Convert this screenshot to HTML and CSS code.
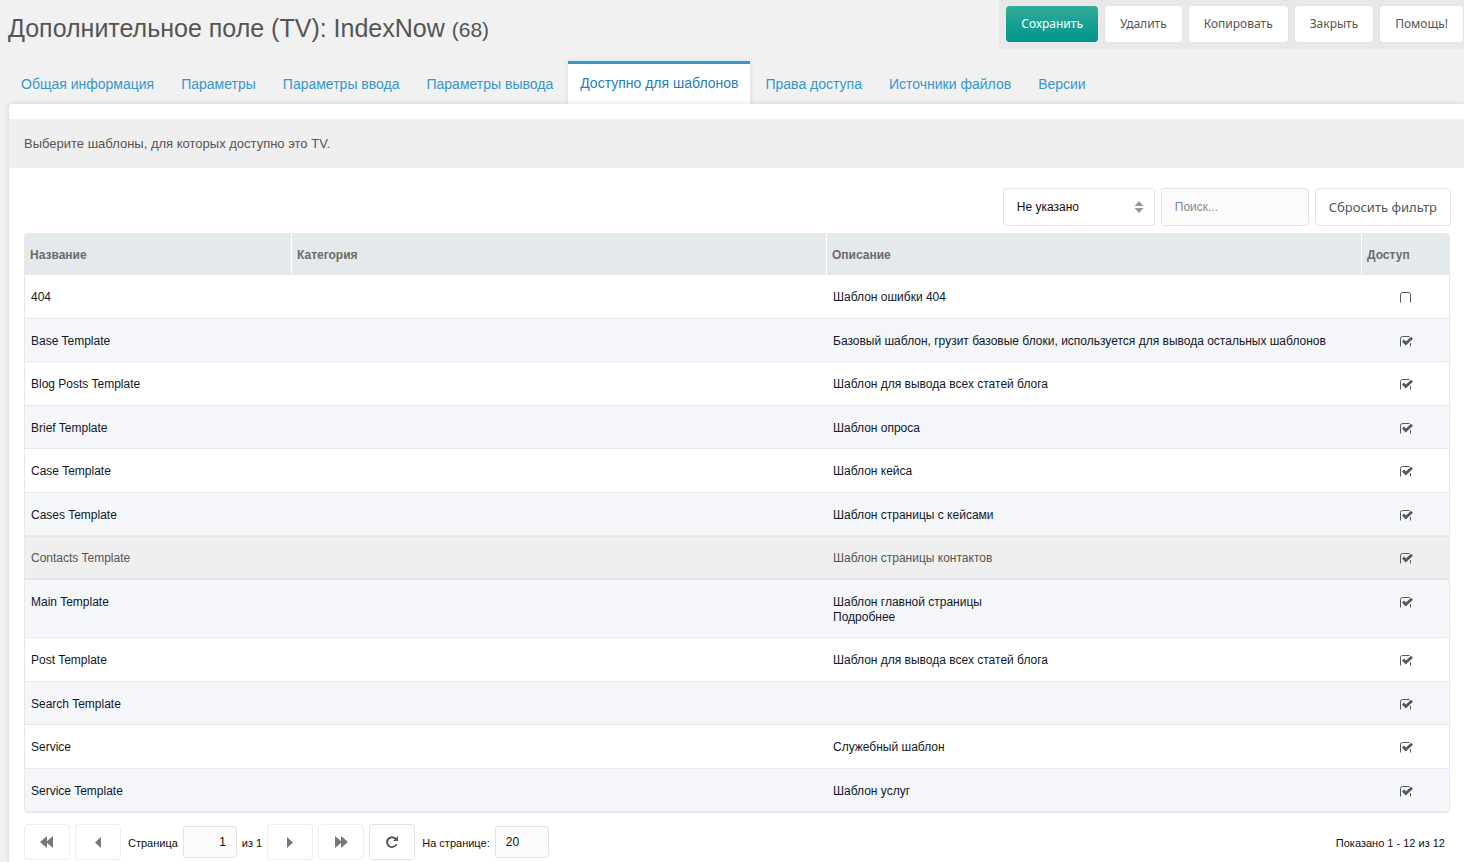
FILE: index.html
```html
<!DOCTYPE html>
<html lang="ru">
<head>
<meta charset="utf-8">
<meta name="viewport" content="width=device-width, initial-scale=1">
<title>Дополнительное поле (TV): IndexNow</title>
<link rel="stylesheet" href="styles.css">
</head>
<body>
<svg class="sprite" aria-hidden="true">
  <symbol id="box" viewBox="0 0 14 11"><path d="M1.500 10.500V2.500Q1.500 .5 3.500 .5H9.500Q11.500 .5 11.500 2.500V10.500" fill="none" stroke="currentColor"/></symbol>
  <symbol id="box-checked" viewBox="0 0 14 11"><path d="M1.500 10.500V2.500Q1.500 .5 3.500 .5H10.500M11.500 7V10.500" fill="none" stroke="currentColor"/><path d="M4 4.500L6.800 7.500L13 1.700" fill="none" stroke="currentColor" stroke-width="2.800"/></symbol>
</svg>
<header class="header">
  <h1 class="title">Дополнительное поле (TV): IndexNow <small>(68)</small></h1>
  <div class="actions">
    <button class="btn btn-primary" type="button">Сохранить</button>
    <button class="btn" type="button">Удалить</button>
    <button class="btn" type="button">Копировать</button>
    <button class="btn" type="button">Закрыть</button>
    <button class="btn" type="button">Помощь!</button>
  </div>
</header>
<nav class="tabs">
  <a class="tab" href="#">Общая информация</a>
  <a class="tab" href="#">Параметры</a>
  <a class="tab" href="#">Параметры ввода</a>
  <a class="tab" href="#">Параметры вывода</a>
  <a class="tab tab-active" href="#" aria-current="page">Доступно для шаблонов</a>
  <a class="tab" href="#">Права доступа</a>
  <a class="tab" href="#">Источники файлов</a>
  <a class="tab" href="#">Версии</a>
</nav>
<main class="panel">
  <p class="intro">Выберите шаблоны, для которых доступно это TV.</p>
  <div class="content">
    <div class="filters">
      <div class="select-wrap">
        <select class="field select" aria-label="Категория"><option>Не указано</option></select>
        <svg class="select-arrow" viewBox="0 0 10 12" aria-hidden="true"><path d="M5 0L9.500 5H.5ZM5 12L.5 7H9.500Z" fill="currentColor"/></svg>
      </div>
      <input class="field search" type="text" placeholder="Поиск..." aria-label="Поиск">
      <button class="btn btn-outline" type="button">Сбросить фильтр</button>
    </div>
    <table class="grid">
      <colgroup><col class="col-name"><col><col><col class="col-access"></colgroup>
      <thead><tr><th>Название</th><th>Категория</th><th>Описание</th><th>Доступ</th></tr></thead>
      <tbody>
        <tr><td>404</td><td></td><td>Шаблон ошибки 404</td><td><label class="check"><input type="checkbox" aria-label="404"><svg class="off"><use href="#box"/></svg><svg class="on"><use href="#box-checked"/></svg></label></td></tr>
        <tr><td>Base Template</td><td></td><td>Базовый шаблон, грузит базовые блоки, используется для вывода остальных шаблонов</td><td><label class="check"><input type="checkbox" checked aria-label="Base Template"><svg class="off"><use href="#box"/></svg><svg class="on"><use href="#box-checked"/></svg></label></td></tr>
        <tr><td>Blog Posts Template</td><td></td><td>Шаблон для вывода всех статей блога</td><td><label class="check"><input type="checkbox" checked aria-label="Blog Posts Template"><svg class="off"><use href="#box"/></svg><svg class="on"><use href="#box-checked"/></svg></label></td></tr>
        <tr><td>Brief Template</td><td></td><td>Шаблон опроса</td><td><label class="check"><input type="checkbox" checked aria-label="Brief Template"><svg class="off"><use href="#box"/></svg><svg class="on"><use href="#box-checked"/></svg></label></td></tr>
        <tr><td>Case Template</td><td></td><td>Шаблон кейса</td><td><label class="check"><input type="checkbox" checked aria-label="Case Template"><svg class="off"><use href="#box"/></svg><svg class="on"><use href="#box-checked"/></svg></label></td></tr>
        <tr><td>Cases Template</td><td></td><td>Шаблон страницы с кейсами</td><td><label class="check"><input type="checkbox" checked aria-label="Cases Template"><svg class="off"><use href="#box"/></svg><svg class="on"><use href="#box-checked"/></svg></label></td></tr>
        <tr class="row-over"><td>Contacts Template</td><td></td><td>Шаблон страницы контактов</td><td><label class="check"><input type="checkbox" checked aria-label="Contacts Template"><svg class="off"><use href="#box"/></svg><svg class="on"><use href="#box-checked"/></svg></label></td></tr>
        <tr><td>Main Template</td><td></td><td>Шаблон главной страницы<br>Подробнее</td><td><label class="check"><input type="checkbox" checked aria-label="Main Template"><svg class="off"><use href="#box"/></svg><svg class="on"><use href="#box-checked"/></svg></label></td></tr>
        <tr><td>Post Template</td><td></td><td>Шаблон для вывода всех статей блога</td><td><label class="check"><input type="checkbox" checked aria-label="Post Template"><svg class="off"><use href="#box"/></svg><svg class="on"><use href="#box-checked"/></svg></label></td></tr>
        <tr><td>Search Template</td><td></td><td></td><td><label class="check"><input type="checkbox" checked aria-label="Search Template"><svg class="off"><use href="#box"/></svg><svg class="on"><use href="#box-checked"/></svg></label></td></tr>
        <tr><td>Service</td><td></td><td>Служебный шаблон</td><td><label class="check"><input type="checkbox" checked aria-label="Service"><svg class="off"><use href="#box"/></svg><svg class="on"><use href="#box-checked"/></svg></label></td></tr>
        <tr><td>Service Template</td><td></td><td>Шаблон услуг</td><td><label class="check"><input type="checkbox" checked aria-label="Service Template"><svg class="off"><use href="#box"/></svg><svg class="on"><use href="#box-checked"/></svg></label></td></tr>
      </tbody>
    </table>
    <footer class="pager">
      <button class="page-btn" type="button" aria-label="Первая страница"><svg viewBox="0 0 14 12"><path d="M7 0V12L0 6ZM13 0V12L6 6Z"/></svg></button>
      <button class="page-btn" type="button" aria-label="Предыдущая страница"><svg viewBox="0 0 14 12"><path d="M10 1V12L4 6.500Z"/></svg></button>
      <label class="page-label" for="page">Страница</label>
      <input class="field page-field page-number" id="page" type="text" value="1">
      <span class="page-count">из 1</span>
      <button class="page-btn" type="button" aria-label="Следующая страница"><svg viewBox="0 0 14 12"><path d="M4 1V12L10 6.500Z"/></svg></button>
      <button class="page-btn" type="button" aria-label="Последняя страница"><svg viewBox="0 0 14 12"><path d="M1 0V12L8 6ZM7 0V12L14 6Z"/></svg></button>
      <button class="page-btn page-refresh" type="button" aria-label="Обновить"><svg viewBox="0 0 14 12"><path d="M13 0V5H8L9.700 3.400A3.900 3.900 0 1 0 10.400 8.200H12.500A5.900 5.900 0 1 1 11.200 1.900Z"/></svg></button>
      <label class="page-label" for="per-page">На странице:</label>
      <input class="field page-field" id="per-page" type="text" value="20">
      <span class="total">Показано 1 - 12 из 12</span>
    </footer>
  </div>
</main>
</body>
</html>
```
FILE: styles.css
```css
* { box-sizing: border-box; }
body {
  margin: 0;
  min-height: 100vh;
  display: flex;
  flex-direction: column;
  background: #f1f1f1;
  color: #555;
  font: 12px/15px "Liberation Sans", Arial, sans-serif;
}
.sprite { display: none; }
.header {
  display: flex;
  justify-content: space-between;
  align-items: flex-start;
  height: 61px;
}
.title {
  margin: 0;
  padding: 13px 0 0 8px;
  font-size: 25px;
  line-height: 30px;
  font-weight: 400;
}
.title small { font-size: 21px; }
.actions {
  display: flex;
  gap: 5px;
  padding: 5px 0 6px 6px;
  background: #e8e8e8;
  border-radius: 0 0 0 4px;
}
.btn {
  height: 38px;
  padding: 0 15px;
  border: 1px solid #e4e4e4;
  border-radius: 4px;
  background: #fff;
  color: #555;
  font: 12px/16px "Noto Sans", sans-serif;
}
.btn-primary {
  border-color: #e8e8e8;
  background: linear-gradient(#32ab9a, #00958c) padding-box;
  color: #fff;
}
.btn-outline { padding: 0 13px; font-size: 13px; }
.tabs {
  display: flex;
  gap: 3px;
  height: 43px;
  padding-left: 9px;
}
.tab {
  padding: 15px 12px 0;
  color: #3697cd;
  font-size: 14px;
  line-height: 16px;
  text-decoration: none;
}
.tab-active {
  padding-top: 11px;
  border-top: 3px solid #3697cd;
  background: #fff;
  box-shadow: 0 0 6px rgba(0, 0, 0, .1);
  color: #2780be;
}
.panel {
  position: relative;
  flex: 1;
  margin-left: 9px;
  padding-top: 15px;
  background: #fff;
  border-radius: 4px 0 0 0;
  box-shadow: 0 0 6px rgba(0, 0, 0, .12);
}
.intro {
  margin: 0;
  padding: 17px 15px 16px;
  background: #efefef;
  font-size: 13px;
  line-height: 16px;
}
.content { padding: 20px 14px 2px 15px; }
.filters {
  display: flex;
  justify-content: flex-end;
  gap: 6px;
  margin-bottom: 7px;
  margin-right: -1px;
}
.field {
  height: 38px;
  padding: 0 13px;
  border: 1px solid #e4e4e4;
  border-radius: 3px;
  background: #fbfbfb;
  color: #111;
  font: 12px/15px "Liberation Sans", Arial, sans-serif;
}
.field::placeholder { color: #888; }
.select-wrap { position: relative; }
.select {
  width: 152px;
  appearance: none;
  background: #fff;
}
.select-arrow {
  position: absolute;
  top: 13px;
  right: 11px;
  width: 10px;
  height: 12px;
  color: #999;
  pointer-events: none;
}
.search { width: 148px; }
.grid {
  width: 100%;
  table-layout: fixed;
  border-collapse: separate;
  border-spacing: 0;
  border: 1px solid #e4e9ec;
  border-width: 0 1px 1px;
  border-radius: 4px;
  overflow: hidden;
  color: #111827;
}
.col-name { width: 267px; }
.col-access { width: 87px; }
.grid th {
  height: 42px;
  padding: 2px 5px 0;
  border-right: 1px solid #fff;
  background: #e4e9ec;
  color: #6b6b6b;
  text-align: left;
}
.grid th:last-child { border-right: 0; }
.grid td {
  padding: 15px 6px 13px;
  border-bottom: 1px solid #e7e9ed;
  vertical-align: top;
}
.grid tr:nth-child(even) td {
  padding-bottom: 12px;
  background: #f4f6fa;
}
.grid tr:last-child td { border-bottom-color: #e4e9ec; }
.grid .row-over td {
  border-top: 1px solid #e4e7e8;
  border-bottom: 2px solid #e4e7e8;
  padding: 14px 6px 12px;
  background: #efefef;
  color: #555;
}
.check {
  position: relative;
  display: block;
  width: 14px;
  height: 11px;
  margin: 2px auto 0;
  color: #55585c;
}
.check input {
  position: absolute;
  inset: 0;
  width: 14px;
  height: 11px;
  margin: 0;
  opacity: 0;
}
.check svg { display: block; width: 14px; height: 11px; }
.check .on { display: none; }
.check input:checked ~ .on { display: block; }
.check input:checked ~ .off { display: none; }
.pager {
  display: flex;
  align-items: center;
  gap: 5px;
  padding-top: 11px;
  color: #111;
  font-size: 11px;
}
.page-btn {
  display: flex;
  align-items: center;
  justify-content: center;
  width: 46px;
  height: 36px;
  padding: 0;
  border: 1px solid #ededed;
  border-radius: 4px;
  background: #fff;
  color: #777;
}
.page-btn svg { width: 14px; height: 12px; fill: currentColor; }
.page-refresh { border-color: #e1e1e1; color: #555; }
.page-label { padding: 2px 0 0 2px; }
.page-count { padding-top: 2px; }
.page-field { width: 54px; height: 32px; padding: 0 10px; }
.page-number { text-align: right; }
.total { margin-left: auto; padding: 2px 5px 0 0; }
```
